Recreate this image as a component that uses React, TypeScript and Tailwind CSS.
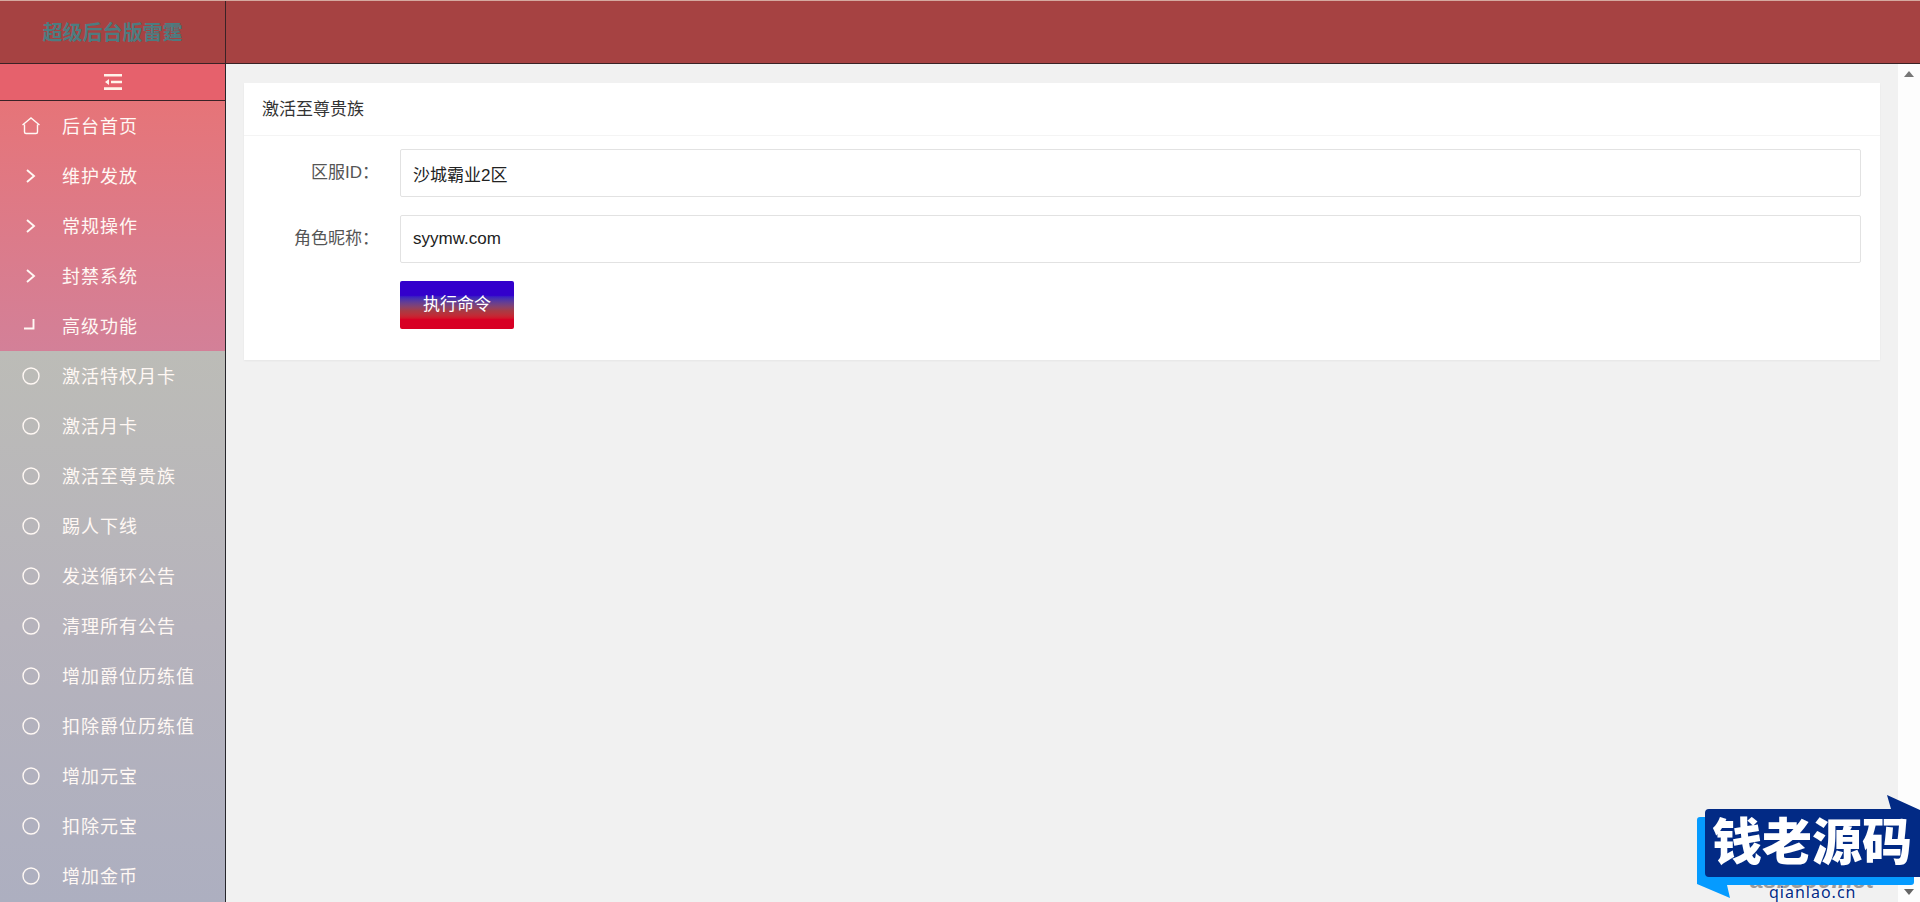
import { useState } from 'react'
import type { ReactNode } from 'react'

type IconName = 'home' | 'right' | 'corner' | 'circle'

interface NavItem {
  label: string
  icon: IconName
}

const MENU: NavItem[] = [
  { label: '后台首页', icon: 'home' },
  { label: '维护发放', icon: 'right' },
  { label: '常规操作', icon: 'right' },
  { label: '封禁系统', icon: 'right' },
  { label: '高级功能', icon: 'corner' },
]

const SUBMENU = [
  '激活特权月卡',
  '激活月卡',
  '激活至尊贵族',
  '踢人下线',
  '发送循环公告',
  '清理所有公告',
  '增加爵位历练值',
  '扣除爵位历练值',
  '增加元宝',
  '扣除元宝',
  '增加金币',
]

const PATHS: Record<IconName, ReactNode> = {
  home: <path d="M0.5 8 L9 1 L17.500 8 M2.500 7.500 V15 Q2.500 16.500 4 16.500 H14 Q15.500 16.500 15.500 15 V7.500" />,
  right: <path d="M5 3 L12 9 L5 15" strokeWidth="1.900" />,
  corner: <path d="M2 11.500 H11.500 V2" strokeWidth="1.900" />,
  circle: <circle cx="9" cy="9" r="8" />,
}

function NavLink({ label, icon }: NavItem) {
  return (
    <a href="#" className="flex h-[50px] items-center gap-[22px] pl-[22px] text-lg tracking-[1px] text-[#fff8f4]">
      <svg width="18" height="18" viewBox="0 0 18 18" fill="none" stroke="currentColor" strokeWidth="1.400" aria-hidden="true">
        {PATHS[icon]}
      </svg>
      <span className="pt-px">{label}</span>
    </a>
  )
}

interface FieldProps {
  id: string
  label: string
  value: string
  onChange: (v: string) => void
}

function Field({ id, label, value, onChange }: FieldProps) {
  return (
    <div className="mb-[18px] flex items-center">
      <label htmlFor={id} className="w-[137px] shrink-0 pr-[21px] text-right text-[#555]">
        {label}
      </label>
      <input
        id={id}
        value={value}
        onChange={(e) => onChange(e.target.value)}
        className="h-12 min-w-0 flex-1 rounded-xs border border-[#e2e2e2] bg-white px-3 font-['Liberation_Sans','Noto_Sans_CJK_SC',sans-serif] leading-6 text-[#222] outline-none"
      />
    </div>
  )
}

/** Blue speech-bubble badge of the site, pinned over the bottom right corner. */
function SiteBadge() {
  return (
    <div className="absolute right-0 bottom-0 h-[108px] w-[223px]">
      <span className="absolute top-[74px] left-[53px] text-2xl leading-none font-bold text-[#9a9a9a] italic">
        asb590.net
      </span>
      <svg className="absolute inset-0" width="223" height="108" viewBox="0 0 223 108" aria-hidden="true">
        <path d="M0 26 Q0 23 3 23 H217 V88 Q217 91 214 91 H30 L33 104 L0 90 Z" fill="#059bff" />
        <path d="M12 15 H194 L190 1 L223 16 V83 H12 Q8 83 8 79 V19 Q8 15 12 15 Z" fill="#022a85" />
      </svg>
      <strong className="absolute top-[21px] left-[15px] text-[50px] leading-[56px] font-black whitespace-nowrap text-white">
        钱老源码
      </strong>
      <span className="absolute top-[88px] left-[72px] font-['Noto_Sans',sans-serif] text-base leading-5 tracking-[1px] text-[#022a85] [text-shadow:0_0_2px_#fff,0_0_2px_#fff]">
        qianlao.cn
      </span>
    </div>
  )
}

export default function App() {
  const [server, setServer] = useState('沙城霸业2区')
  const [nickname, setNickname] = useState('syymw.com')

  return (
    <div className="relative flex h-screen flex-col overflow-hidden bg-[#f1f1f1] font-['Liberation_Sans','Noto_Sans_CJK_SC',sans-serif] text-[17px]">
      <header className="flex h-16 shrink-0 border-t border-b border-t-[#d5a9a0] border-b-[#3a2226] bg-[#a64242]">
        <div className="flex w-[226px] items-center justify-center border-r border-[#3a2226] pt-px text-xl font-bold text-[#4d7c80]">
          超级后台版雷霆
        </div>
      </header>

      <div className="flex min-h-0 flex-1">
        <nav className="w-[226px] shrink-0 overflow-hidden border-r border-[#26262b] bg-[#adafc0]">
          <button
            aria-label="收起菜单"
            className="flex h-[37px] w-full items-center justify-center border-b border-[#3a2226] bg-[#e6616c]"
          >
            <svg width="18" height="16" viewBox="0 0 18 16" fill="#fff3ea" aria-hidden="true">
              <path d="M0 0h18v2.500H0zM7 6.700h11v2.500H7zM0 13.300h18V16H0zM1 8l4-3v6z" />
            </svg>
          </button>
          <div className="bg-linear-to-b from-[#e67478] to-[#d38098]">
            {MENU.map((item) => (
              <NavLink key={item.label} {...item} />
            ))}
          </div>
          <div className="bg-linear-to-b from-[#bcbcb7] via-[#b6b3bc] to-[#adafc0]">
            {SUBMENU.map((label) => (
              <NavLink key={label} label={label} icon="circle" />
            ))}
          </div>
        </nav>

        <main className="min-w-0 flex-1 px-[18px] py-[19px]">
          <section className="bg-white shadow-xs">
            <h1 className="h-[53px] border-b border-[#f4f4f4] pl-[18px] leading-[54px] text-[#333]">激活至尊贵族</h1>
            <form className="px-[19px] pt-[13px] pb-[31px]" onSubmit={(e) => e.preventDefault()}>
              <Field id="server" label="区服ID：" value={server} onChange={setServer} />
              <Field id="nickname" label="角色昵称：" value={nickname} onChange={setNickname} />
              <button className="ml-[137px] h-12 rounded-xs bg-linear-to-b from-[#3300cc] from-30% via-[#a83a44] via-62% to-[#d80024] to-80% px-[23px] text-white">
                执行命令
              </button>
            </form>
          </section>
        </main>

        <div className="flex w-[22px] shrink-0 flex-col items-center justify-between bg-[#fdfdfd] py-[7px]">
          <svg width="10" height="6" viewBox="0 0 10 6" fill="#777" aria-hidden="true">
            <path d="M5 0l5 6H0z" />
          </svg>
          <svg width="10" height="6" viewBox="0 0 10 6" fill="#666" aria-hidden="true">
            <path d="M5 6L0 0h10z" />
          </svg>
        </div>
      </div>

      <SiteBadge />
    </div>
  )
}
